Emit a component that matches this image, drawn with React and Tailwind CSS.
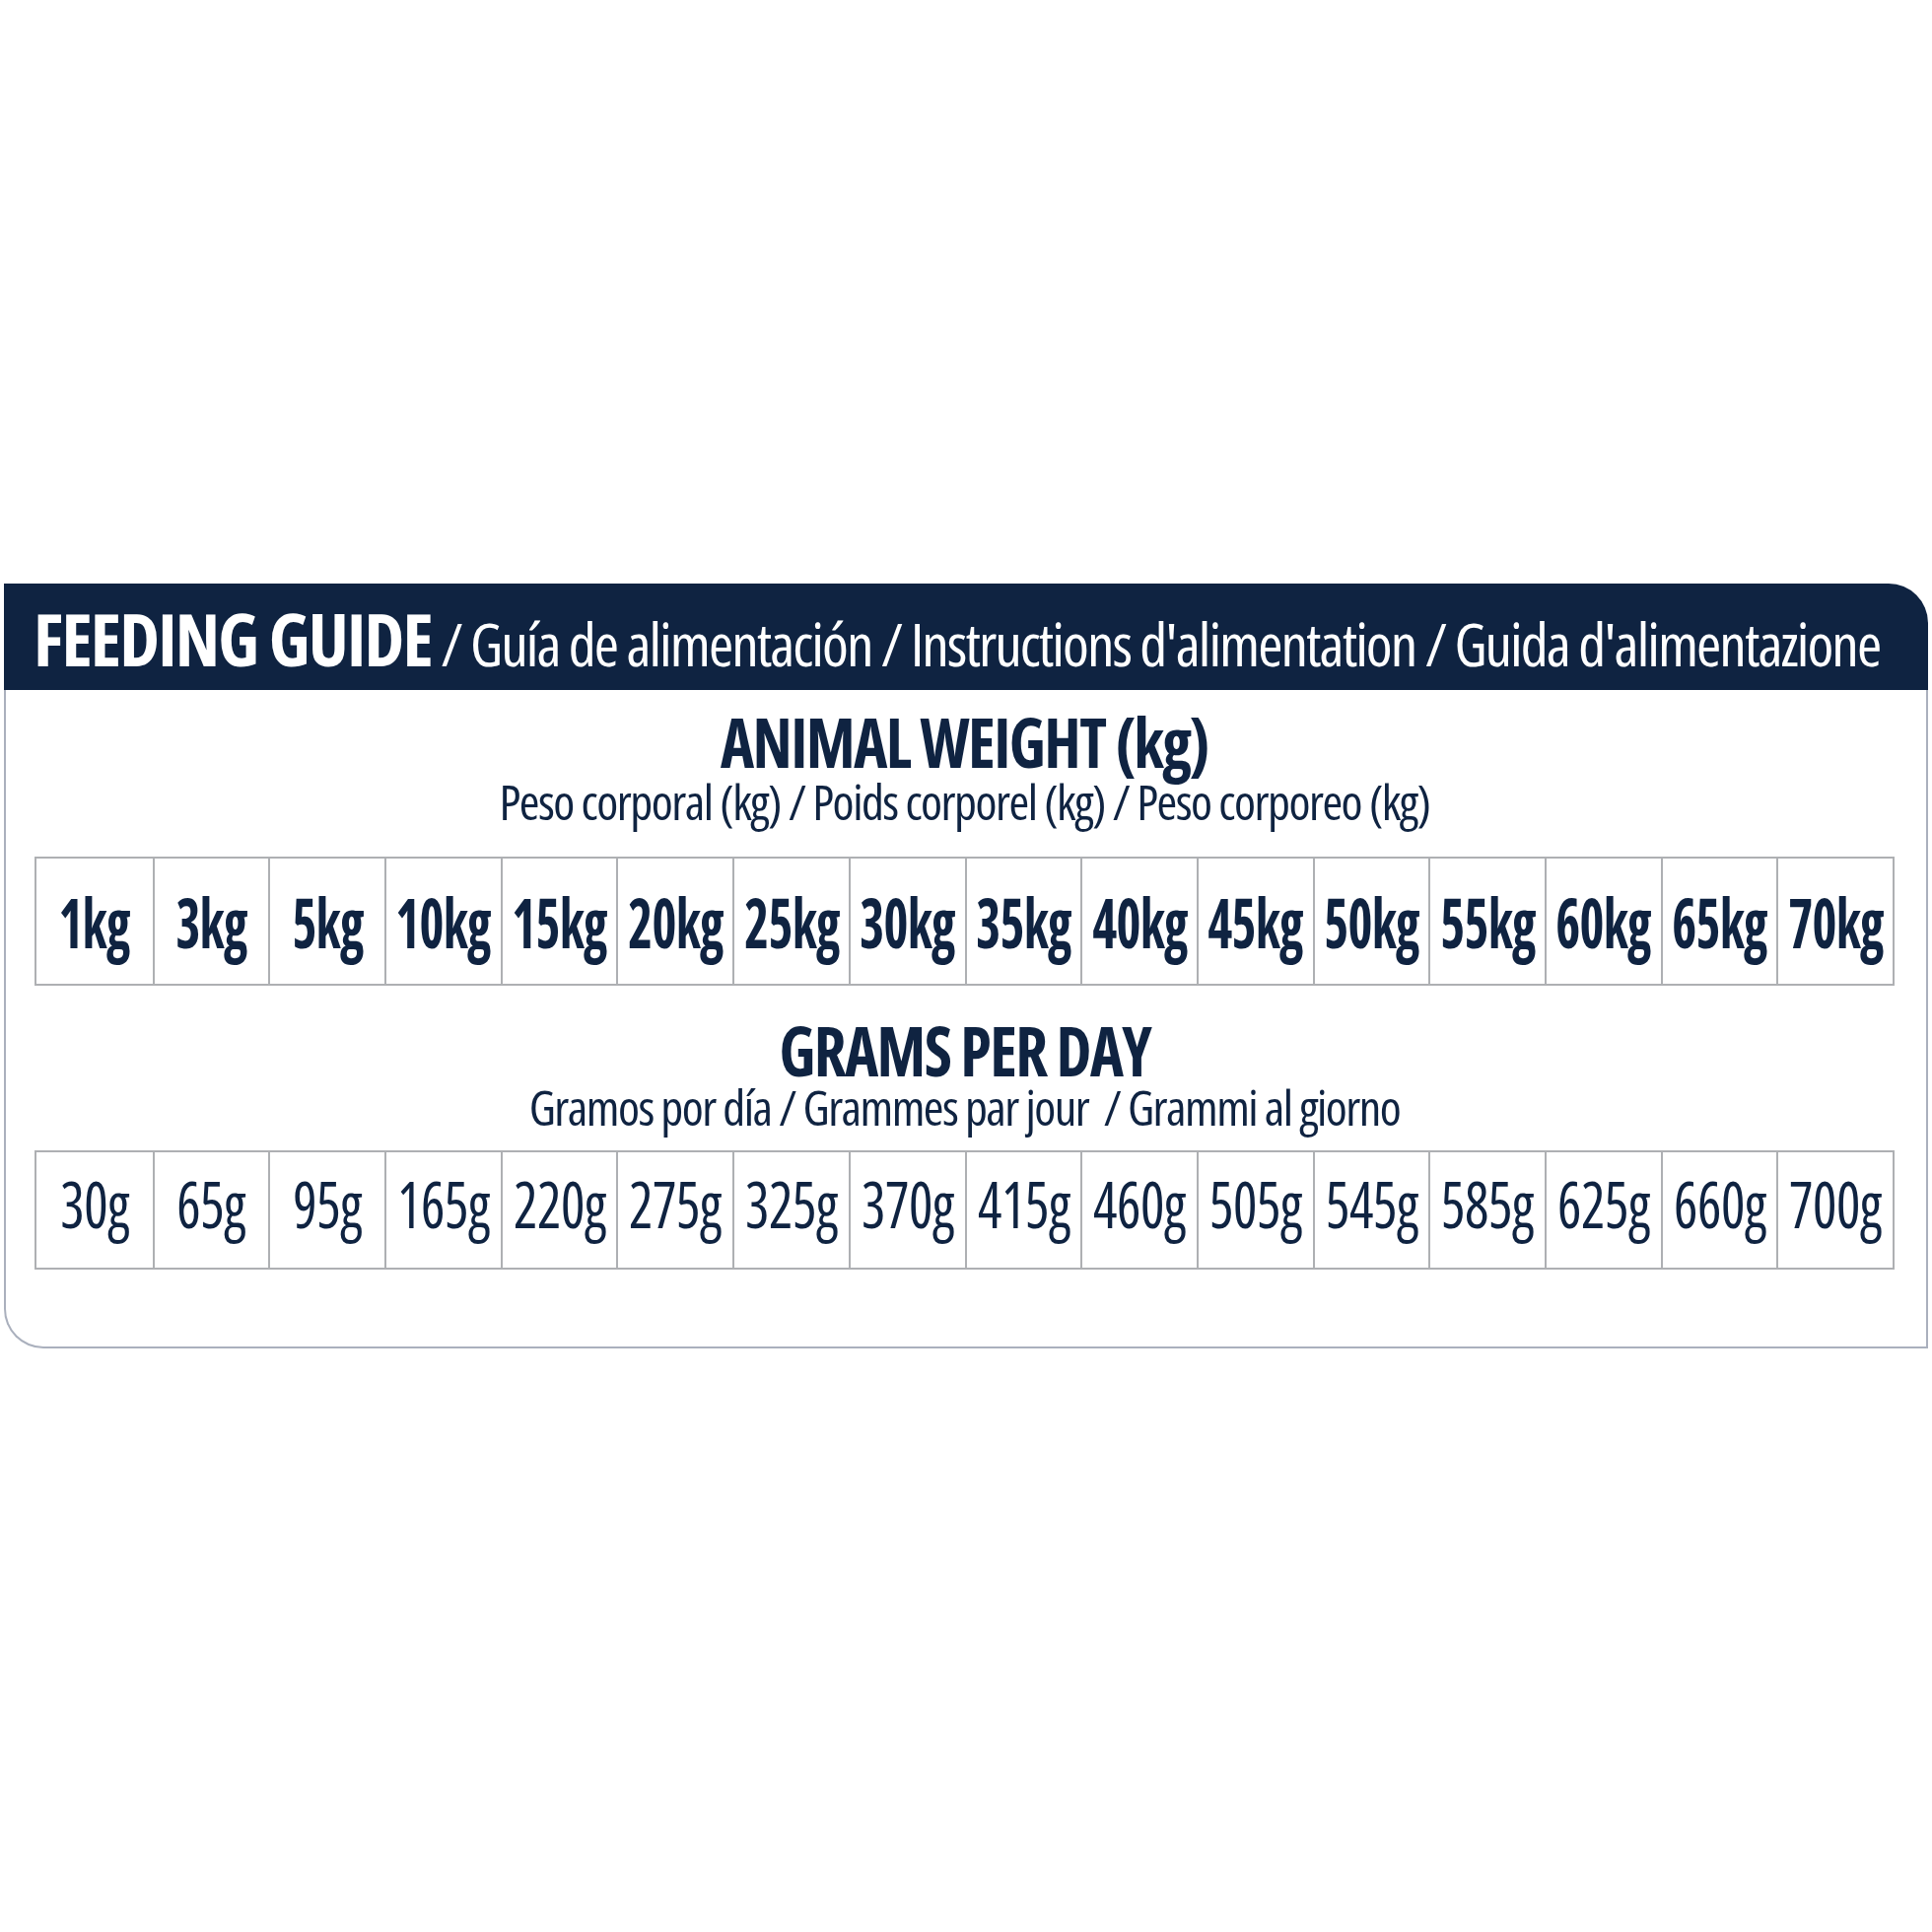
const WEIGHTS = ["1kg","3kg","5kg","10kg","15kg","20kg","25kg","30kg","35kg","40kg","45kg","50kg","55kg","60kg","65kg","70kg"];
const GRAMS = ["30g","65g","95g","165g","220g","275g","325g","370g","415g","460g","505g","545g","585g","625g","660g","700g"];

function Row({ items, bold, h, extra }) {
  return (
    <div className={"grid grid-cols-16 border-2 border-[#aeb0b3] " + h}>
      {items.map((t, i) => (
        <div
          key={t}
          className={
            "min-w-0 flex items-center justify-center text-[#0f2341] leading-none whitespace-nowrap " +
            (i > 0 ? "border-l-2 border-[#aeb0b3] " : "") +
            extra
          }
        >
          {bold ? (
            <span className="inline-block font-bold text-[70px] tracking-[-1px] scale-x-[0.76]">{t}</span>
          ) : (
            <span className="inline-block font-normal text-[66px] tracking-[-0.5px] scale-x-[0.87]">{t}</span>
          )}
        </div>
      ))}
    </div>
  );
}

export default function App() {
  return (
    <div className="w-[1960px] h-[1960px] bg-white overflow-hidden font-['Open_Sans',sans-serif] [font-stretch:75%]">
      <div className="pt-[592px] pl-[4px]">
        <div className="w-[1952px]">
          <div className="h-[108px] bg-[#0f2341] rounded-tr-[40px] flex items-baseline pt-[19px] pl-[30px] text-white whitespace-nowrap">
            <span className="font-bold text-[73px] leading-none tracking-[-1.8px]">FEEDING GUIDE</span>
            <span className="font-normal text-[61px] leading-none tracking-[-1.95px]">&nbsp;/ Guía de alimentación / Instructions d'alimentation / Guida d'alimentazione</span>
          </div>
          <div className="h-[668px] border-x-2 border-b-2 border-[#aab0bd] rounded-bl-[40px] pl-[29px] pr-[32px] pt-[17px] text-[#0f2341]">
            <div className="text-center leading-none">
              <span className="inline-block font-bold text-[70px] tracking-[-1.7px] scale-x-[0.925]">ANIMAL WEIGHT (kg)</span>
            </div>
            <div className="mt-[1px] text-center font-normal text-[50px] leading-none tracking-[-1.5px]">Peso corporal (kg) / Poids corporel (kg) / Peso corporeo (kg)</div>
            <div className="mt-[31px]">
              <Row items={WEIGHTS} bold h="h-[131px]" extra="" />
            </div>
            <div className="mt-[30px] text-center leading-none">
              <span className="inline-block font-bold text-[70px] tracking-[-1.7px] scale-x-[0.92]">GRAMS PER DAY</span>
            </div>
            <div className="mt-[-2px] text-center font-normal text-[50px] leading-none whitespace-pre tracking-[-1.55px]">Gramos por día / Grammes par jour  / Grammi al giorno</div>
            <div className="mt-[19px]">
              <Row items={GRAMS} h="h-[121px]" extra="pb-[16px]" />
            </div>
          </div>
        </div>
      </div>
    </div>
  );
}
